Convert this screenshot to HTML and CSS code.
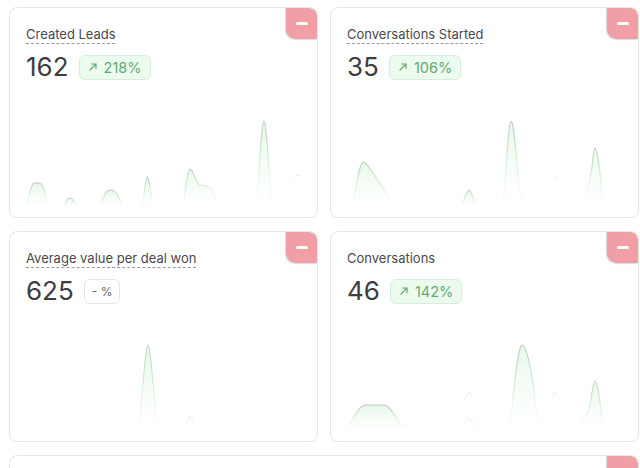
FILE: index.html
```html
<!DOCTYPE html>
<html lang="en">
<head>
    <meta charset="UTF-8">
    <meta name="viewport" content="width=device-width, initial-scale=1.0">
    <title>Dashboard Widgets</title>
    <link rel="stylesheet" href="styles.css">
</head>
<body>
    <div class="grid">
        <div class="card">
            <button class="remove" type="button"><span></span></button>
            <div class="head">
                <span class="title dashed">Created Leads</span>
                <div class="stat">
                    <span class="value">162</span>
                    <span class="change up">
                        <svg viewBox="0 0 10 10" width="10" height="10"><path d="M2 8 L8 2 M3.5 2 H8 V6.5" /></svg>
                        218%
                    </span>
                </div>
            </div>
            <svg class="chart" viewBox="0 0 307 120" preserveAspectRatio="none">
                <defs>
                    <linearGradient id="lineFade" x1="0" y1="0" x2="0" y2="1">
                        <stop offset="0" stop-color="#a9b3aa" stop-opacity="0.7" />
                        <stop offset="0.4" stop-color="#9bd8a5" stop-opacity="0.45" />
                        <stop offset="1" stop-color="#cdeed1" stop-opacity="0" />
                    </linearGradient>
                    <linearGradient id="areaFade" x1="0" y1="0" x2="0" y2="1">
                        <stop offset="0" stop-color="#d3f3d7" stop-opacity="0.6" />
                        <stop offset="1" stop-color="#eefbef" stop-opacity="0" />
                    </linearGradient>
                </defs>
                <path d="M17 110 C20 95 21 86 25 86 L29 86 C33 86 35 95 38 110" />
                <path d="M53 110 C57 102 58 101 60 101 C62 101 64 104 67 110" />
                <path d="M90 110 C94 96 97 93 101 93 C105 93 109 98 112 110" />
                <path d="M132 110 C135 92 136 80 137 80 C139 80 140 92 143 110" />
                <path d="M173 110 C176 85 178 72 180 72 C183 72 186 86 190 88 C195 89 198 88 201 92 C204 96 206 104 208 110" />
                <path d="M246 110 C250 60 252 24 254 24 C256 24 258 60 262 110" />
                <path class="thin" d="M282 82 C284 79 286 78 289 79" />
            </svg>
        </div>

        <div class="card">
            <button class="remove" type="button"><span></span></button>
            <div class="head">
                <span class="title dashed">Conversations Started</span>
                <div class="stat">
                    <span class="value">35</span>
                    <span class="change up">
                        <svg viewBox="0 0 10 10" width="10" height="10"><path d="M2 8 L8 2 M3.5 2 H8 V6.5" /></svg>
                        106%
                    </span>
                </div>
            </div>
            <svg class="chart" viewBox="0 0 307 120" preserveAspectRatio="none">
                <path d="M21 110 C26 85 29 65 32 65 C36 65 45 80 64 110" />
                <path d="M130 110 C134 100 136 93 138 93 C140 93 142 100 144 110" />
                <path d="M172 110 C176 60 178 24 180 24 C183 24 185 60 189 95 C192 108 200 110 214 110" />
                <path class="thin" d="M221 84 C222 81 223 80 224 80 C225 80 226 82 227 84" />
                <path d="M249 110 C254 100 258 90 261 70 C262 58 263 51 264 51 C266 51 268 65 270 85 C271 96 272 104 274 110" />
            </svg>
        </div>

        <div class="card">
            <button class="remove" type="button"><span></span></button>
            <div class="head">
                <span class="title dashed">Average value per deal won</span>
                <div class="stat">
                    <span class="value">625</span>
                    <span class="change none">- %</span>
                </div>
            </div>
            <svg class="chart" viewBox="0 0 307 120" preserveAspectRatio="none">
                <path d="M129 110 C133 60 136 24 138 24 C140 24 143 60 147 110" />
                <path class="thin" d="M175 110 C177 100 179 95 180 95 C181 95 183 100 185 110" />
            </svg>
        </div>

        <div class="card">
            <button class="remove" type="button"><span></span></button>
            <div class="head">
                <span class="title">Conversations</span>
                <div class="stat">
                    <span class="value">46</span>
                    <span class="change up">
                        <svg viewBox="0 0 10 10" width="10" height="10"><path d="M2 8 L8 2 M3.5 2 H8 V6.5" /></svg>
                        142%
                    </span>
                </div>
            </div>
            <svg class="chart" viewBox="0 0 307 120" preserveAspectRatio="none">
                <path d="M17 110 C22 96 28 86 34 84 L54 84 C60 86 66 98 74 110" />
                <path class="thin" d="M133 80 C135 75 137 72 138 72 C139 72 141 75 143 80" />
                <path class="thin" d="M132 105 C135 100 137 97 138 97 C139 97 141 100 144 110" />
                <path d="M179 110 C183 60 188 24 191 24 C195 24 200 45 203 70 C205 90 207 104 209 110" />
                <path class="thin" d="M219 80 C221 76 223 72 224 72 C225 72 227 76 229 80" />
                <path d="M244 110 C250 100 256 95 259 85 C261 70 263 60 264 60 C266 60 268 72 270 90 C271 100 272 106 274 110" />
            </svg>
        </div>

        <div class="card wide">
            <button class="remove" type="button"><span></span></button>
        </div>
    </div>
</body>
</html>
```

FILE: styles.css
```css
body {
    margin: 0;
    background-color: #fff;
    font-family: Inter, "Noto Sans", sans-serif;
    color: #444;
    overflow: hidden;
}
.grid {
    display: grid;
    grid-template-columns: 1fr 1fr;
    grid-auto-rows: 211px;
    gap: 13px 12px;
    padding: 7px 1px 0 9px;
}
.card {
    position: relative;
    display: flex;
    flex-direction: column;
    background-color: #fff;
    border: 1px solid #e6e6e6;
    border-radius: 8px;
    overflow: hidden;
}
.card.wide {
    grid-column: span 2;
}
.remove {
    position: absolute;
    top: 0;
    right: 0;
    width: 31px;
    height: 31px;
    padding: 0;
    border: none;
    border-radius: 0 8px 0 10px;
    background-color: #f19ea7;
    box-shadow: -1px 1px 1px rgba(120, 100, 100, 0.25);
    display: flex;
    align-items: center;
    justify-content: center;
    cursor: pointer;
}
.remove span {
    display: block;
    width: 12px;
    height: 3px;
    border-radius: 2px;
    background-color: #fff;
}
.head {
    padding: 15px 16px 0 16px;
}
.title {
    display: inline-block;
    font-size: 13px;
    line-height: 16px;
    font-weight: 400;
    color: #4a4a4a;
}
.title.dashed {
    text-decoration: underline dashed #9a9a9a;
    text-decoration-thickness: 1px;
    text-underline-offset: 4px;
}
.stat {
    display: flex;
    align-items: center;
    gap: 10px;
    margin-top: 10px;
}
.value {
    font-size: 26px;
    line-height: 28px;
    color: #3d3d3d;
}
.change {
    display: inline-flex;
    align-items: center;
    gap: 6px;
    height: 23px;
    padding: 0 8px;
    border-radius: 6px;
    font-size: 14.5px;
}
.change.up {
    background-color: #edfaee;
    border: 1px solid #d5efd8;
    color: #62ab72;
}
.change.up svg {
    fill: none;
    stroke: #62ab72;
    stroke-width: 1.2;
    stroke-linecap: round;
}
.change.none {
    background-color: #fff;
    border: 1px solid #e4e4e4;
    color: #666;
    font-size: 12px;
    padding: 0 7px;
}
.chart {
    display: block;
    width: 100%;
    height: 120px;
    margin-top: auto;
}
.chart path {
    fill: url(#areaFade);
    stroke: url(#lineFade);
    stroke-width: 1.2;
}
.chart path.thin {
    fill: none;
    stroke-width: 0.9;
    opacity: 0.5;
}
```
